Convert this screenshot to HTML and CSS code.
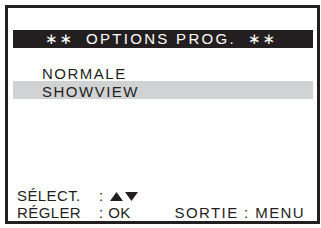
FILE: index.html
```html
<!DOCTYPE html>
<html lang="fr">
<head>
    <meta charset="UTF-8">
    <meta name="viewport" content="width=device-width, initial-scale=1.0">
    <title>Options prog.</title>
    <link rel="stylesheet" href="styles.css">
</head>
<body>
    <div class="screen">
        <div class="title-bar">
            <span class="stars">∗∗</span>
            <span class="title-text">OPTIONS PROG.</span>
            <span class="stars">∗∗</span>
        </div>

        <ul class="menu">
            <li class="menu-item">NORMALE</li>
            <li class="menu-item selected">SHOWVIEW</li>
        </ul>

        <div class="footer">
            <div class="footer-row">
                <span class="key-label">SÉLECT.</span>
                <span class="key-value">:
                    <svg class="arrows" width="29" height="9" viewBox="0 0 29 9">
                        <polygon points="0,9 6.5,0 13,9" />
                        <polygon points="15,0 28,0 21.5,9" />
                    </svg>
                </span>
            </div>
            <div class="footer-row">
                <span class="key-label">RÉGLER</span>
                <span class="key-value">: OK</span>
                <span class="exit">SORTIE : MENU</span>
            </div>
        </div>
    </div>
</body>
</html>
```

FILE: styles.css
```css
body {
    margin: 0;
    background-color: #ffffff;
    font-family: 'Liberation Sans', Arial, sans-serif;
    color: #231f20;
}

.screen {
    box-sizing: border-box;
    width: 315px;
    height: 219px;
    margin: 5px 0 0 5px;
    border: 3px solid #231f20;
    padding: 22px 4px 0 5px;
    display: flex;
    flex-direction: column;
}

.title-bar {
    display: flex;
    align-items: center;
    height: 18px;
    background-color: #231f20;
    color: #ffffff;
    font-size: 15px;
    padding-left: 32px;
    white-space: pre;
}

.stars {
    width: 22px;
    font-family: 'DejaVu Sans', sans-serif;
    font-size: 15px;
    letter-spacing: 2px;
    line-height: 18px;
}

.title-text {
    margin: 0 12px 0 19px;
    letter-spacing: 2.3px;
    line-height: 18px;
}

.menu {
    list-style: none;
    margin: 15px 0 0 0;
    padding: 0;
}

.menu-item {
    height: 18px;
    box-sizing: border-box;
    padding: 3px 0 0 29px;
    line-height: 15px;
    font-size: 15px;
    letter-spacing: 1.5px;
}

.menu-item.selected {
    background-color: #d1d2d3;
}

.footer {
    margin-top: auto;
    padding: 0 8px 0 4px;
    font-size: 15px;
    letter-spacing: 0.4px;
}

.footer-row {
    display: flex;
    height: 17px;
    line-height: 17px;
}

.key-label {
    width: 82px;
}

.key-value {
    white-space: nowrap;
}

.arrows {
    fill: #231f20;
    margin-left: 2px;
}

.exit {
    margin-left: auto;
    letter-spacing: 1.4px;
}
```
